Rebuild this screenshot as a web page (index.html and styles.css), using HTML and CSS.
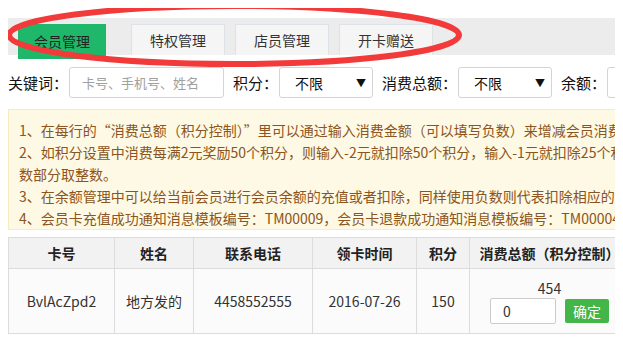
FILE: index.html
```html
<!DOCTYPE html>
<html lang="zh-CN">
<head>
    <meta charset="UTF-8">
    <meta name="viewport" content="width=device-width, initial-scale=1.0">
    <title>会员管理</title>
    <link rel="stylesheet" href="styles.css">
</head>
<body>
    <div class="page">
        <!-- Tabs -->
        <div class="tab-bar">
            <button class="tab active">会员管理</button>
            <button class="tab">特权管理</button>
            <button class="tab">店员管理</button>
            <button class="tab">开卡赠送</button>
        </div>

        <!-- Filters -->
        <div class="filter-row">
            <label class="filter-label">关键词：</label>
            <input class="filter-input keyword" type="text" placeholder="卡号、手机号、姓名">
            <label class="filter-label">积分：</label>
            <div class="filter-select">不限<span class="arrow">▼</span></div>
            <label class="filter-label">消费总额：</label>
            <div class="filter-select">不限<span class="arrow">▼</span></div>
            <label class="filter-label">余额：</label>
            <input class="filter-input balance" type="text">
        </div>

        <!-- Notice -->
        <div class="notice">
            <p class="tip-line">1、在每行的“消费总额（积分控制）”里可以通过输入消费金额（可以填写负数）来增减会员消费总额。</p>
            <p class="tip-line wrap">2、如积分设置中消费每满2元奖励50个积分，则输入-2元就扣除50个积分，输入-1元就扣除25个积分，小数部分取整数。</p>
            <p class="tip-line">3、在余额管理中可以给当前会员进行会员余额的充值或者扣除，同样使用负数则代表扣除相应的会员余额。</p>
            <p class="tip-line">4、会员卡充值成功通知消息模板编号：TM00009，会员卡退款成功通知消息模板编号：TM00004</p>
        </div>

        <!-- Member table -->
        <table class="member-table">
            <thead>
                <tr>
                    <th class="col-card">卡号</th>
                    <th class="col-name">姓名</th>
                    <th class="col-phone">联系电话</th>
                    <th class="col-date">领卡时间</th>
                    <th class="col-points">积分</th>
                    <th class="col-total">消费总额（积分控制）</th>
                    <th class="col-balance">余额</th>
                </tr>
            </thead>
            <tbody>
                <tr>
                    <td>BvlAcZpd2</td>
                    <td>地方发的</td>
                    <td>4458552555</td>
                    <td>2016-07-26</td>
                    <td>150</td>
                    <td>
                        <div class="total-value">454</div>
                        <div class="total-edit">
                            <input class="total-input" type="text" value="0">
                            <button class="ok-btn">确定</button>
                        </div>
                    </td>
                    <td>0.00</td>
                </tr>
            </tbody>
        </table>
    </div>

    <!-- hand-drawn highlight over the tabs -->
    <svg class="highlight" width="470" height="72" viewBox="0 0 470 72">
        <ellipse cx="232" cy="35" rx="225" ry="29" fill="none" stroke="#f23a3a" stroke-width="6"/>
    </svg>
</body>
</html>
```

FILE: styles.css
```css
* {
    margin: 0;
    padding: 0;
    box-sizing: border-box;
}

body {
    font-family: "Noto Sans CJK SC", "Noto Sans", sans-serif;
    color: #333;
    background: #fff;
    margin: 8px;
    overflow: hidden;
    position: relative;
}

.page {
    width: 677px;
}

/* Tabs */
.tab-bar {
    display: flex;
    align-items: flex-start;
    height: 37px;
    margin-top: 10px;
    padding: 6px 0 0 10px;
    background: #ececec;
    width: 720px;
}

.tab {
    width: 94px;
    height: 31px;
    margin-right: 10px;
    border: 1px solid #dde1e8;
    border-bottom: none;
    background: #f5f5f5;
    font-family: inherit;
    font-size: 14px;
    color: #333;
}

.tab.active {
    width: 88px;
    height: 35px;
    margin-right: 25px;
    padding-bottom: 2px;
    border: none;
    background: #1fb86a;
    color: #222;
}

/* Filters */
.filter-row {
    display: flex;
    align-items: center;
    margin-top: 12px;
    width: 720px;
}

.filter-label {
    font-size: 15px;
    color: #111;
    margin-right: 1px;
}

.filter-input,
.filter-select {
    height: 31px;
    border: 1px solid #d4d4d4;
    border-radius: 3px;
    margin-right: 9px;
    background: #fff;
    font-family: inherit;
}

.filter-input.keyword {
    width: 155px;
    padding: 0 12px;
    font-size: 13px;
}

.filter-input.keyword::placeholder {
    color: #a0a0a0;
}

.filter-input.balance {
    width: 60px;
}

.filter-select {
    width: 94px;
    display: flex;
    align-items: center;
    justify-content: space-between;
    padding: 0 6px 0 15px;
    font-size: 14px;
    color: #111;
}

.filter-select .arrow {
    font-size: 10px;
}

/* Notice */
.notice {
    margin-top: 11px;
    padding: 9px 10px 0;
    background: #fdf9e4;
    border: 1px solid #f6ecc0;
    font-size: 14px;
    line-height: 22px;
    color: #8c5420;
}

.tip-line {
    white-space: nowrap;
}

.tip-line.wrap {
    white-space: normal;
}

/* Table */
.member-table {
    margin-top: 7px;
    border-collapse: collapse;
    table-layout: fixed;
    width: 780px;
    font-size: 14px;
}

.member-table th,
.member-table td {
    border: 1px solid #dcdcdc;
    text-align: center;
}

.member-table th {
    height: 31px;
    background: #f2f2f2;
    font-weight: bold;
    color: #222;
}

.member-table td {
    height: 65px;
    background: #fbfbfb;
    color: #333;
}

.col-card { width: 106px; }
.col-name { width: 79px; }
.col-phone { width: 119px; }
.col-date { width: 104px; }
.col-points { width: 53px; }
.col-total { width: 160px; }

.total-value {
    line-height: 18px;
}

.total-edit {
    display: flex;
    align-items: center;
    justify-content: center;
    gap: 9px;
    margin-top: 1px;
}

.total-input {
    width: 66px;
    height: 26px;
    border: 1px solid #ccc;
    border-radius: 2px;
    padding: 0 12px;
    font-family: inherit;
    font-size: 14px;
    color: #333;
}

.ok-btn {
    width: 44px;
    height: 24px;
    border: none;
    border-radius: 2px;
    background: #44b549;
    color: #fff;
    font-family: inherit;
    font-size: 14px;
}

/* Highlight ring */
.highlight {
    position: absolute;
    left: -6px;
    top: -8px;
    pointer-events: none;
}
```
